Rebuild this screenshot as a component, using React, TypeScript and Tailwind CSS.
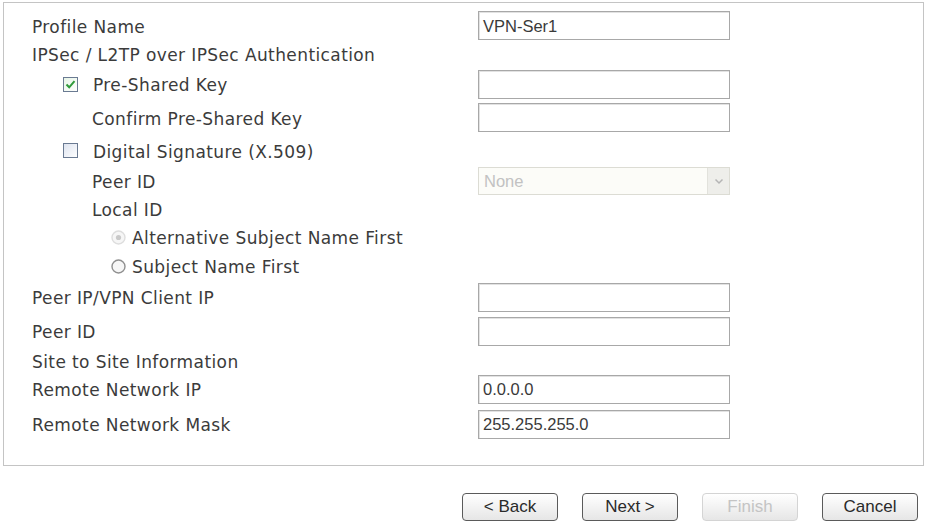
import React from "react";

const labelFont = { fontFamily: '"DejaVu Sans", Verdana, sans-serif' };

function TextBox({ value = "" }: { value?: string }) {
  return (
    <div className="w-[252px] h-[29px] border border-[#a8a8a8] bg-white shadow-[inset_1px_1px_0_#e2e2e2] flex items-center px-[4px] pt-[1px] font-['Liberation_Sans',Arial,sans-serif] text-[16.5px] tracking-normal text-[#3a3a3a]">
      {value}
    </div>
  );
}

function CheckBox({ checked }: { checked: boolean }) {
  return (
    <svg width="15" height="15" viewBox="0 0 15 15" className="shrink-0">
      <defs>
        <linearGradient id={checked ? "cbg1" : "cbg2"} x1="0" y1="0" x2="1" y2="1">
          <stop offset="0" stopColor={checked ? "#e6f4e6" : "#dde3ef"} />
          <stop offset="1" stopColor="#ffffff" />
        </linearGradient>
      </defs>
      <rect x="0.5" y="0.5" width="14" height="14" fill={`url(#${checked ? "cbg1" : "cbg2"})`} stroke="#6a7a92" />
      {checked && (
        <path d="M3.5 7.5 L6.2 10.3 L11.5 4.2" fill="none" stroke="#2f9a3a" strokeWidth="2" />
      )}
    </svg>
  );
}

function Radio({ checked, disabled }: { checked: boolean; disabled?: boolean }) {
  return (
    <svg width="15" height="15" viewBox="0 0 15 15" className="shrink-0">
      <circle cx="7.5" cy="7.5" r="6.5" fill="#f6f6f6" stroke={disabled ? "#dddddd" : "#8f8f8f"} strokeWidth="1.4" />
      {checked && <circle cx="7.5" cy="7.5" r="2.6" fill={disabled ? "#c9c9c9" : "#555"} />}
    </svg>
  );
}

function Button({ label, disabled }: { label: string; disabled?: boolean }) {
  return (
    <button
      className={`w-[96px] h-[28px] rounded-[4px] border font-['Liberation_Sans',Arial,sans-serif] text-[17px] bg-gradient-to-b from-white to-[#e6e6e6] ${
        disabled ? "border-[#d4d4d4] text-[#c4c4c4]" : "border-[#5a5a5a] text-[#2a2a2a]"
      }`}
    >
      {label}
    </button>
  );
}

// label text sits a little low in the original
function Label({ children, className = "" }: { children: React.ReactNode; className?: string }) {
  return <div className={`pt-[4px] ${className}`}>{children}</div>;
}

export default function App() {
  return (
    <div className="w-[926px] h-[523px] bg-white text-[#3b3b3b] text-[17px] tracking-[0.4px] pt-[2px]" style={labelFont}>
      {/* Form panel */}
      <div className="ml-[3px] w-[921px] h-[464px] border border-[#c4c4c4] pt-[7px] pl-[28px]">
        <div className="flex items-center h-[31px]">
          <Label className="w-[446px]">Profile Name</Label>
          <TextBox value="VPN-Ser1" />
        </div>
        <div className="flex items-center h-[26px]">
          <Label>IPSec / L2TP over IPSec Authentication</Label>
        </div>
        <div className="flex items-center h-[34px]">
          <div className="w-[446px] flex items-center gap-[15px] pl-[31px]">
            <CheckBox checked />
            <Label>Pre-Shared Key</Label>
          </div>
          <TextBox />
        </div>
        <div className="flex items-center h-[33px]">
          <Label className="w-[446px] pl-[60px]">Confirm Pre-Shared Key</Label>
          <TextBox />
        </div>
        <div className="flex items-center h-[33px]">
          <div className="w-[446px] flex items-center gap-[15px] pl-[31px]">
            <CheckBox checked={false} />
            <Label>Digital Signature (X.509)</Label>
          </div>
        </div>
        <div className="flex items-center h-[28px]">
          <Label className="w-[446px] pl-[60px]">Peer ID</Label>
          <div className="w-[252px] h-[28px] border border-[#dcdcd4] bg-[#fcfcf8] flex items-center justify-between font-['Liberation_Sans',Arial,sans-serif] text-[16.5px] tracking-normal text-[#c2c2c2]">
            <span className="pl-[5px]">None</span>
            <span className="w-[22px] h-full bg-[#eeeeea] border-l border-[#e2e2dc] flex items-center justify-center">
              <svg width="10" height="7" viewBox="0 0 10 7">
                <path d="M1.5 1.5 L5 5 L8.5 1.5" fill="none" stroke="#b5b5b5" strokeWidth="1.5" />
              </svg>
            </span>
          </div>
        </div>
        <div className="flex items-center h-[28px] pl-[60px]">
          <Label>Local ID</Label>
        </div>
        <div className="flex items-center h-[28px] pl-[79px] gap-[6px]">
          <Radio checked disabled />
          <Label>Alternative Subject Name First</Label>
        </div>
        <div className="flex items-center h-[30px] pl-[79px] gap-[6px]">
          <Radio checked={false} />
          <Label>Subject Name First</Label>
        </div>
        <div className="flex items-center h-[32px]">
          <Label className="w-[446px]">Peer IP/VPN Client IP</Label>
          <TextBox />
        </div>
        <div className="flex items-center h-[36px]">
          <Label className="w-[446px]">Peer ID</Label>
          <TextBox />
        </div>
        <div className="flex items-center h-[24px]">
          <Label>Site to Site Information</Label>
        </div>
        <div className="flex items-center h-[32px]">
          <Label className="w-[446px]">Remote Network IP</Label>
          <TextBox value="0.0.0.0" />
        </div>
        <div className="flex items-center h-[38px]">
          <Label className="w-[446px]">Remote Network Mask</Label>
          <TextBox value="255.255.255.0" />
        </div>
      </div>

      {/* Wizard buttons */}
      <div className="flex justify-end gap-[24px] pr-[8px] mt-[27px] tracking-normal">
        <Button label="< Back" />
        <Button label="Next >" />
        <Button label="Finish" disabled />
        <Button label="Cancel" />
      </div>
    </div>
  );
}
